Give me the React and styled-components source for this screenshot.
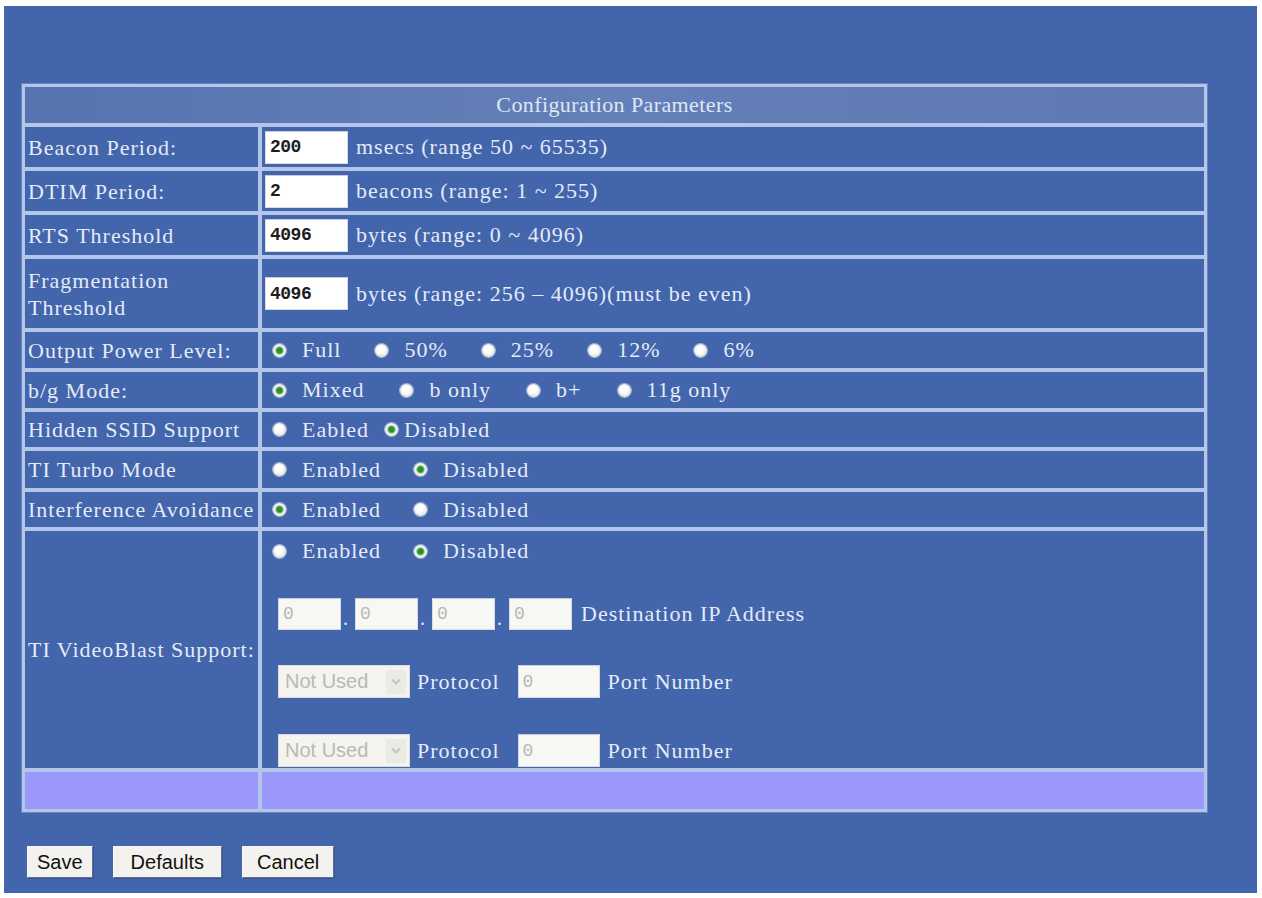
import React from 'react';
import styled, { createGlobalStyle } from 'styled-components';

const GlobalStyle = createGlobalStyle`
  html, body {
    margin: 0;
    padding: 0;
    background: #ffffff;
  }
  body {
    font-family: "Liberation Serif", "Times New Roman", serif;
  }
`;

const Page = styled.div`
  margin: 6px 5px 5px 4px;
  height: 887px;
  background: #4365ab;
  padding: 78px 0 0 18px;
  box-sizing: border-box;
`;

const Table = styled.div`
  width: 1185px;
  box-sizing: border-box;
  display: flex;
  flex-direction: column;
  gap: 4px;
  padding: 3px;
  background: #b3c6ea;
  box-shadow: 0 0 0 1px #6a84bc;
`;

const Header = styled.div`
  height: 36px;
  display: flex;
  align-items: center;
  justify-content: center;
  background: linear-gradient(90deg, #5773b0, #6580b8 50%, #5d78b3);
  color: #dfe7f6;
  font-size: 22px;
  letter-spacing: 0.4px;
`;

const Row = styled.div`
  display: grid;
  grid-template-columns: 233px 1fr;
  gap: 4px;
  height: ${(p) => p.$h}px;
`;

const Label = styled.div`
  display: flex;
  align-items: center;
  padding: 0 3px;
  background: ${(p) => (p.$blank ? '#9a98fb' : '#4365ab')};
  color: #e4ebf8;
  font-size: 22px;
  letter-spacing: 1px;
  line-height: 27px;
`;

const Value = styled.div`
  display: flex;
  align-items: center;
  padding-left: ${(p) => p.$pad ?? 3}px;
  background: ${(p) => (p.$blank ? '#9a98fb' : '#4365ab')};
  color: #e4ebf8;
  font-size: 22px;
  letter-spacing: 1px;
  white-space: nowrap;
`;

const TextInput = styled.input`
  box-sizing: border-box;
  width: ${(p) => p.$w ?? 83}px;
  height: ${(p) => p.$hgt ?? 33}px;
  margin: 0 ${(p) => p.$after ?? 8}px 0 0;
  padding: 0 4px;
  border: 1px solid #d6dbe4;
  border-top-color: #c8ccd4;
  background: ${(p) => (p.disabled ? '#f7f7f3' : '#ffffff')};
  color: ${(p) => (p.disabled ? '#b8b8b8' : '#1d1d1d')};
  font-family: "Liberation Mono", "DejaVu Sans Mono", monospace;
  font-weight: ${(p) => (p.disabled ? 400 : 700)};
  font-size: 18px;
  letter-spacing: -0.5px;
  outline: none;
`;

const RadioGroup = styled.div`
  display: flex;
  align-items: center;
  gap: ${(p) => p.$gap}px;
  padding-left: 11px;
`;

const Option = styled.label`
  display: flex;
  align-items: center;
  gap: ${(p) => p.$gap ?? 16}px;
`;

const Radio = styled.span`
  width: 13px;
  height: 13px;
  border-radius: 50%;
  flex: none;
  background: ${(p) =>
    p.$checked
      ? 'radial-gradient(circle, #2f8c2f 0 2.6px, #86c486 3.6px, #f3f7ef 4.8px)'
      : 'radial-gradient(circle at 45% 40%, #ffffff 0 3px, #ecece6 6.5px)'};
  box-shadow: 0 0 0 1px rgba(225, 232, 240, 0.6);
`;

const VideoStack = styled.div`
  display: flex;
  flex-direction: column;
  align-self: stretch;
  padding: 6px 0 0 0;
`;

const VideoLine = styled.div`
  display: flex;
  align-items: center;
  height: ${(p) => p.$hgt ?? 33}px;
  margin-top: ${(p) => p.$top ?? 0}px;
  padding-left: ${(p) => p.$left ?? 16}px;
`;

const Dot = styled.span`
  align-self: flex-end;
  width: 14px;
  padding-left: 2px;
  box-sizing: border-box;
  font-size: 20px;
  line-height: 24px;
  color: #e4ebf8;
`;

const FakeSelect = styled.span`
  box-sizing: border-box;
  display: inline-flex;
  align-items: center;
  justify-content: space-between;
  width: 132px;
  height: 33px;
  margin-right: 7px;
  padding: 0 3px 0 6px;
  background: #f4f3ef;
  border: 1px solid #dcdcd6;
  color: #b9b9b4;
  font-family: "Liberation Sans", Arial, sans-serif;
  font-size: 20px;
  letter-spacing: 0;
`;

const SelectArrow = styled.span`
  display: flex;
  align-items: center;
  justify-content: center;
  width: 20px;
  height: 24px;
  background: #ebebe6;
  color: #c9c9c4;
`;

const Gap = styled.span`
  display: inline-block;
  width: ${(p) => p.$w}px;
`;

const ButtonBar = styled.div`
  display: flex;
  gap: 20px;
  margin: 34px 0 0 5px;
`;

const Button = styled.button`
  height: 32px;
  padding: 0 ${(p) => p.$px ?? 10}px;
  background: #f3f2ee;
  border: 1px solid #f8f8f6;
  border-right-color: #5b6f98;
  border-bottom-color: #5b6f98;
  box-shadow: 1px 1px 0 #39558f;
  color: #111;
  font-family: "Liberation Sans", Arial, sans-serif;
  font-size: 20px;
  cursor: pointer;
`;

function RadioRow({ options, checked, gap }) {
  return (
    <RadioGroup $gap={gap}>
      {options.map((opt) => (
        <Option key={opt}>
          <Radio $checked={opt === checked} />
          {opt}
        </Option>
      ))}
    </RadioGroup>
  );
}

function IpField({ last }) {
  return (
    <>
      <TextInput disabled defaultValue="0" $w={63} $hgt={32} $after={last ? 9 : 0} />
      {!last && <Dot>.</Dot>}
    </>
  );
}

function ProtocolLine({ top }) {
  return (
    <VideoLine $top={top}>
      <FakeSelect>
        Not Used
        <SelectArrow>
          <svg width="10" height="7" viewBox="0 0 10 7">
            <path d="M1 1.5 L5 5.5 L9 1.5" fill="none" stroke="#c4c4bf" strokeWidth="2" />
          </svg>
        </SelectArrow>
      </FakeSelect>
      Protocol
      <Gap $w={18} />
      <TextInput disabled defaultValue="0" $w={82} />
      Port Number
    </VideoLine>
  );
}

export default function App() {
  return (
    <>
      <GlobalStyle />
      <Page>
        <Table>
          <Header>Configuration Parameters</Header>
          <Row $h={40}>
            <Label>Beacon Period:</Label>
            <Value>
              <TextInput defaultValue="200" />
              msecs (range 50 ~ 65535)
            </Value>
          </Row>
          <Row $h={40}>
            <Label>DTIM Period:</Label>
            <Value>
              <TextInput defaultValue="2" />
              beacons (range: 1 ~ 255)
            </Value>
          </Row>
          <Row $h={40}>
            <Label>RTS Threshold</Label>
            <Value>
              <TextInput defaultValue="4096" />
              bytes (range: 0 ~ 4096)
            </Value>
          </Row>
          <Row $h={69}>
            <Label>Fragmentation Threshold</Label>
            <Value>
              <TextInput defaultValue="4096" />
              bytes (range: 256 – 4096)(must be even)
            </Value>
          </Row>
          <Row $h={36}>
            <Label>Output Power Level:</Label>
            <Value $pad={0}>
              <RadioRow gap={34} checked="Full" options={['Full', '50%', '25%', '12%', '6%']} />
            </Value>
          </Row>
          <Row $h={36}>
            <Label>b/g Mode:</Label>
            <Value $pad={0}>
              <RadioRow gap={36} checked="Mixed" options={['Mixed', 'b only', 'b+', '11g only']} />
            </Value>
          </Row>
          <Row $h={35}>
            <Label>Hidden SSID Support</Label>
            <Value $pad={0}>
              <RadioGroup $gap={16}>
                <Option>
                  <Radio />
                  Eabled
                </Option>
                <Option $gap={6}>
                  <Radio $checked />
                  Disabled
                </Option>
              </RadioGroup>
            </Value>
          </Row>
          <Row $h={37}>
            <Label>TI Turbo Mode</Label>
            <Value $pad={0}>
              <RadioRow gap={33} checked="Disabled" options={['Enabled', 'Disabled']} />
            </Value>
          </Row>
          <Row $h={35}>
            <Label>Interference Avoidance</Label>
            <Value $pad={0}>
              <RadioRow gap={33} checked="Enabled" options={['Enabled', 'Disabled']} />
            </Value>
          </Row>
          <Row $h={237}>
            <Label>TI VideoBlast Support:</Label>
            <Value $pad={0}>
              <VideoStack>
                <VideoLine $left={0} $hgt={28}>
                  <RadioRow gap={33} checked="Disabled" options={['Enabled', 'Disabled']} />
                </VideoLine>
                <VideoLine $top={32}>
                  <IpField />
                  <IpField />
                  <IpField />
                  <IpField last />
                  Destination IP Address
                </VideoLine>
                <ProtocolLine top={35} />
                <ProtocolLine top={36} />
              </VideoStack>
            </Value>
          </Row>
          <Row $h={37}>
            <Label $blank />
            <Value $blank />
          </Row>
        </Table>
        <ButtonBar>
          <Button $px={9}>Save</Button>
          <Button $px={17}>Defaults</Button>
          <Button $px={14}>Cancel</Button>
        </ButtonBar>
      </Page>
    </>
  );
}
